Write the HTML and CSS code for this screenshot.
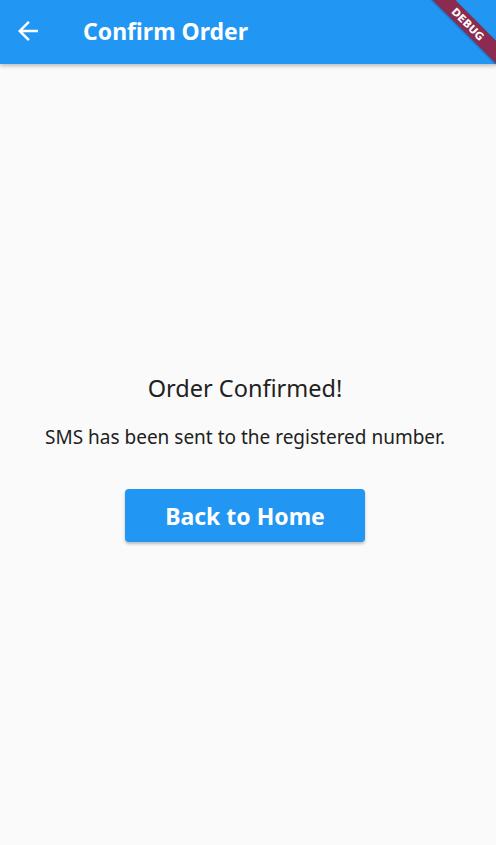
FILE: index.html
```html
<!DOCTYPE html>
<html lang="en">
<head>
    <meta charset="UTF-8">
    <meta name="viewport" content="width=device-width, initial-scale=1.0">
    <title>Confirm Order</title>
    <link rel="stylesheet" href="styles.css">
</head>
<body>
    <header class="appbar">
        <a href="#none" class="back">
            <svg width="30" height="30" viewBox="0 0 24 24"><path d="M20 11H7.83l5.59-5.59L12 4l-8 8 8 8 1.41-1.41L7.83 13H20v-2z" fill="#fff"/></svg>
        </a>
        <h1>Confirm Order</h1>
    </header>
    <div class="banner">DEBUG</div>
    <main class="content">
        <h2>Order Confirmed!</h2>
        <p>SMS has been sent to the registered number.</p>
        <a href="#none" class="home_btn">Back to Home</a>
    </main>
</body>
</html>
```
FILE: styles.css
```css
*{padding: 0;
margin: 0;}
html,body{
    height: 100%;
}
body{
    background: #fafafa;
    font-family: "Noto Sans", "Open Sans", sans-serif;
    color: #212121;
    display: flex;
    flex-direction: column;
    overflow: hidden;
}
.appbar{
    height: 64px;
    padding-bottom: 3px;
    box-sizing: border-box;
    background: #2196f3;
    display: flex;
    align-items: center;
    box-shadow: 0 2px 4px rgba(0, 0, 0, 0.25);
    flex-shrink: 0;
}
.back{
    display: flex;
    width: 30px;
    height: 30px;
    margin-left: 13px;
}
.appbar h1{
    margin-left: 40px;
    color: white;
    font-size: 23px;
    font-weight: 700;
}
.banner{
    position: absolute;
    top: 16px;
    right: -22px;
    width: 100px;
    height: 16px;
    line-height: 16px;
    background: #8a2b4f;
    color: white;
    font-family: "DejaVu Sans", sans-serif;
    font-size: 10.5px;
    font-weight: 700;
    text-align: center;
    transform: rotate(45deg);
    box-shadow: 0 1px 2px rgba(0, 0, 0, 0.3);
}
.content{
    flex: 1;
    display: flex;
    flex-direction: column;
    align-items: center;
    justify-content: center;
    padding: 6px 6px 0 0;
}
.content h2{
    font-size: 23.5px;
    line-height: 30px;
    font-weight: 400;
}
.content p{
    margin-top: 21px;
    font-size: 19px;
    line-height: 26px;
}
.home_btn{
    margin-top: 39px;
    width: 240px;
    height: 53px;
    background: #2196f3;
    color: white;
    border-radius: 4px;
    font-size: 23px;
    font-weight: 700;
    text-decoration: none;
    display: flex;
    justify-content: center;
    align-items: center;
    box-shadow: 0 2px 3px rgba(0, 0, 0, 0.25);
}
```
